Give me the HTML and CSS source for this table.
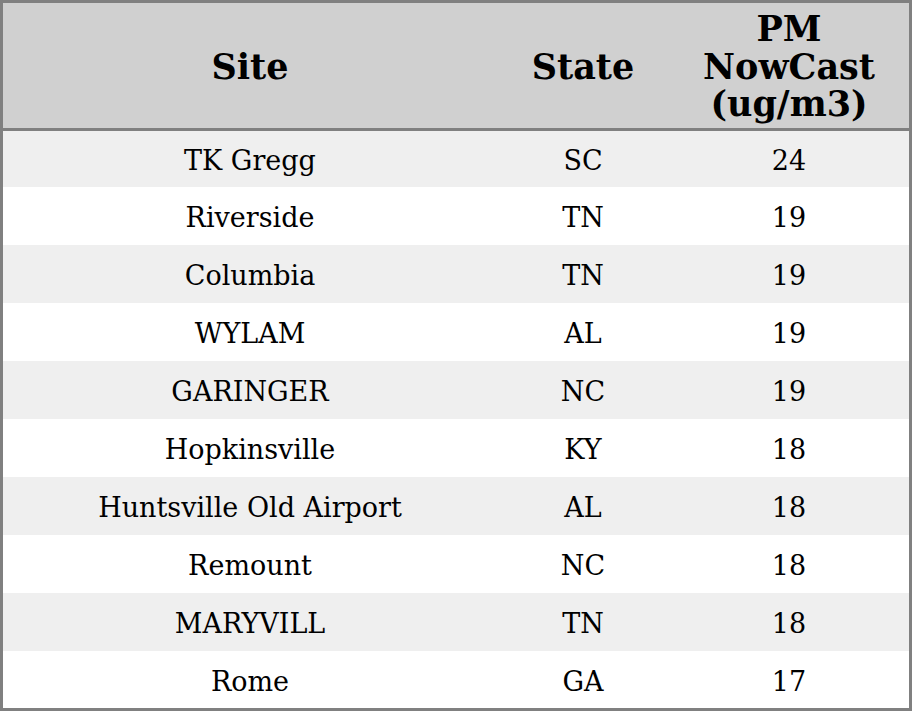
FILE: index.html
```html
<!DOCTYPE html>
<html>
<head>
<meta charset="utf-8">
<link rel="stylesheet" href="styles.css">
</head>
<body>
<table class="aq">
  <thead>
    <tr>
      <th class="c-site">Site</th>
      <th class="c-state">State</th>
      <th class="c-pm">PM<br>NowCast<br>(ug/m3)</th>
    </tr>
  </thead>
  <tbody>
    <tr><td>TK Gregg</td><td>SC</td><td>24</td></tr>
    <tr><td>Riverside</td><td>TN</td><td>19</td></tr>
    <tr><td>Columbia</td><td>TN</td><td>19</td></tr>
    <tr><td>WYLAM</td><td>AL</td><td>19</td></tr>
    <tr><td>GARINGER</td><td>NC</td><td>19</td></tr>
    <tr><td>Hopkinsville</td><td>KY</td><td>18</td></tr>
    <tr><td>Huntsville Old Airport</td><td>AL</td><td>18</td></tr>
    <tr><td>Remount</td><td>NC</td><td>18</td></tr>
    <tr><td>MARYVILL</td><td>TN</td><td>18</td></tr>
    <tr><td>Rome</td><td>GA</td><td>17</td></tr>
  </tbody>
</table>
</body>
</html>
```
FILE: styles.css
```css
html, body {
  margin: 0;
  padding: 0;
  background: #ffffff;
}
.aq {
  width: 912px;
  border-collapse: separate;
  border-spacing: 0;
  border: 3px solid #808080;
  font-family: "DejaVu Serif", serif;
  color: #000;
  table-layout: fixed;
}
.aq th {
  background: #d0d0d0;
  font-weight: bold;
  font-size: 35px;
  line-height: 37.5px;
  height: 128px;
  box-sizing: border-box;
  padding: 2px 0 0 0;
  text-align: center;
  vertical-align: middle;
  border-bottom: 3px solid #808080;
}
.c-site { width: 494px; }
.c-state { width: 172px; }
.c-pm { width: 240px; }
.aq td {
  font-size: 27px;
  line-height: 30px;
  height: 58px;
  box-sizing: border-box;
  padding: 4px 0 0 0;
  text-align: center;
  vertical-align: middle;
}
.aq tbody tr:first-child td { height: 56px; }
.aq tbody tr:last-child td { height: 57px; }
.aq tbody tr:nth-child(odd) td {
  background: #efefef;
}
```
